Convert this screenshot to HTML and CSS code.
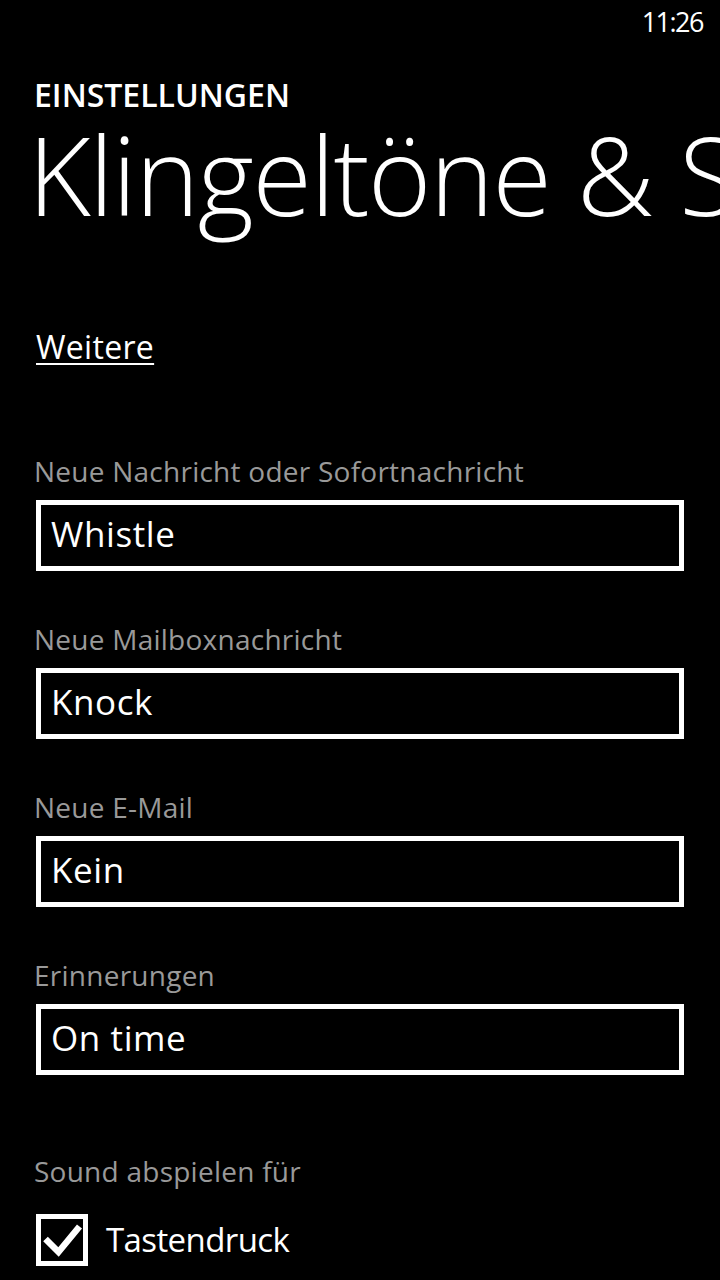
FILE: index.html
```html
<!DOCTYPE html>
<html lang="de">
<head>
<meta charset="utf-8">
<title>Klingeltöne &amp; Sounds</title>
<link rel="stylesheet" href="styles.css">
</head>
<body>
<div class="screen">
  <div class="status"><span class="time">11:26</span></div>
  <div class="page">
    <div class="app-title">EINSTELLUNGEN</div>
    <div class="page-title">Klingeltöne &amp; Sounds</div>
    <a class="link" href="#">Weitere</a>

    <div class="setting first">
      <div class="label">Neue Nachricht oder Sofortnachricht</div>
      <div class="picker">Whistle</div>
    </div>
    <div class="setting">
      <div class="label">Neue Mailboxnachricht</div>
      <div class="picker">Knock</div>
    </div>
    <div class="setting">
      <div class="label">Neue E-Mail</div>
      <div class="picker">Kein</div>
    </div>
    <div class="setting">
      <div class="label">Erinnerungen</div>
      <div class="picker">On time</div>
    </div>

    <div class="label sound-label">Sound abspielen für</div>
    <div class="check-row">
      <div class="checkbox">
        <svg width="42" height="42" viewBox="0 0 42 42"><path d="M4.5 20 L17.5 33 L38.5 7.5" fill="none" stroke="#fff" stroke-width="6.5" stroke-linecap="butt" stroke-linejoin="miter"/></svg>
      </div>
      <span class="check-text">Tastendruck</span>
    </div>
  </div>
</div>
</body>
</html>
```

FILE: styles.css
```css
html, body {
  margin: 0;
  padding: 0;
  background: #000;
}
body {
  color: #fff;
  font-family: "Open Sans", "Noto Sans", "Liberation Sans", sans-serif;
  width: 720px;
  height: 1280px;
  overflow: hidden;
}
.screen {
  width: 720px;
  height: 1280px;
  overflow: hidden;
}
.status {
  height: 44px;
  line-height: 44px;
  display: flex;
  justify-content: flex-end;
  padding-right: 17px;
}
.time {
  font-size: 27px;
  letter-spacing: -1.5px;
}
.page {
  padding: 0 36px;
}
.app-title {
  margin-top: 31px;
  margin-left: -2px;
  font-size: 32px;
  line-height: 40px;
  font-weight: 600;
  letter-spacing: 0;
}
.page-title {
  margin-top: 0;
  margin-left: -8px;
  font-size: 108px;
  line-height: 120px;
  height: 121px;
  font-weight: 300;
  white-space: nowrap;
  letter-spacing: -1.4px;
}
.link {
  display: inline-block;
  margin-top: 91px;
  font-size: 32px;
  line-height: 40px;
  color: #fff;
  text-decoration: underline;
  text-decoration-thickness: 2px;
  text-underline-offset: 4px;
  letter-spacing: 0.3px;
}
.setting {
  margin-top: 50px;
}
.setting.first {
  margin-top: 86px;
}
.label {
  margin-left: -2px;
  font-size: 28px;
  line-height: 36px;
  color: #999;
  white-space: nowrap;
  letter-spacing: 0.25px;
}
.picker {
  margin-top: 11px;
  box-sizing: border-box;
  height: 71px;
  border: 5px solid #fff;
  padding: 0 11px 4px 10px;
  font-size: 35px;
  line-height: 57px;
  letter-spacing: 0.6px;
}
.sound-label {
  margin-top: 78px;
}
.check-row {
  margin-top: 25px;
  display: flex;
  align-items: center;
  gap: 18px;
}
.checkbox {
  box-sizing: border-box;
  width: 52px;
  height: 52px;
  border: 5px solid #fff;
}
.checkbox svg {
  display: block;
}
.check-text {
  font-size: 33px;
  line-height: 52px;
  letter-spacing: -0.6px;
}
```
